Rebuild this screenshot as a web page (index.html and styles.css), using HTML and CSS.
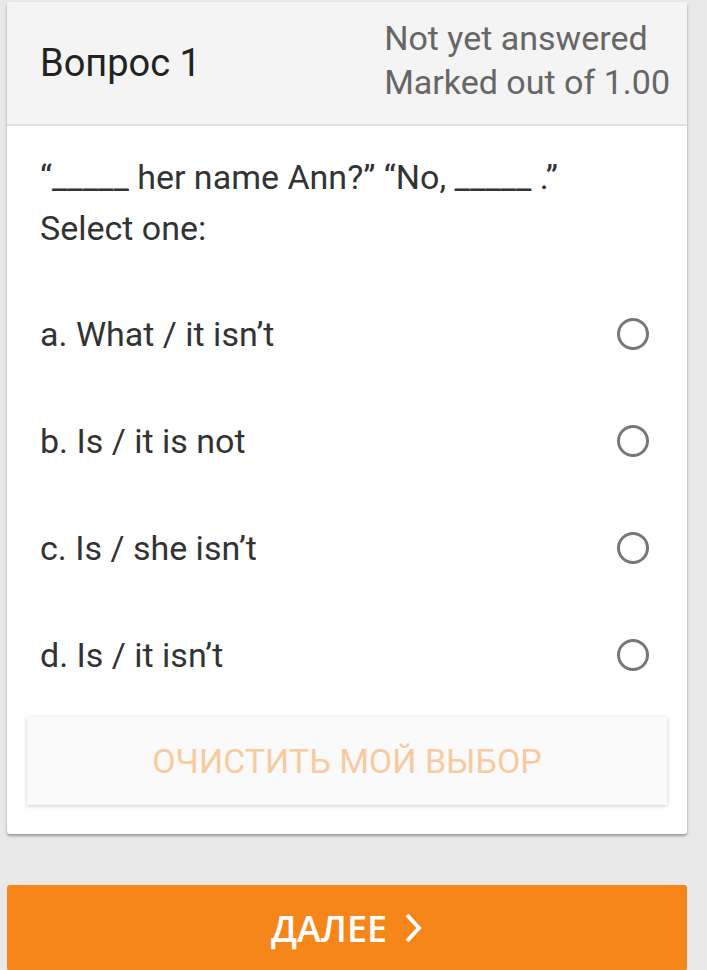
FILE: index.html
```html
<!DOCTYPE html>
<html lang="ru">
<head>
	<meta charset="UTF-8">
	<title>Вопрос 1</title>
	<meta name="viewport" content="width=device-width, initial-scale=1">
	<link rel="stylesheet" href="styles.css">
</head>
<body>
	<div id="page">
		<div class="card">
			<div class="card-head">
				<h2 class="q-title">Вопрос 1</h2>
				<div class="q-info">
					<div>Not yet answered</div>
					<div>Marked out of 1.00</div>
				</div>
			</div>
			<div class="card-body">
				<div class="q-text">
					<p>“_____ her name Ann?” “No, _____ .”</p>
					<p>Select one:</p>
				</div>
				<div class="answers">
					<label class="answer">
						<span>a. What / it isn’t</span>
						<span class="radio"></span>
					</label>
					<label class="answer">
						<span>b. Is / it is not</span>
						<span class="radio"></span>
					</label>
					<label class="answer">
						<span>c. Is / she isn’t</span>
						<span class="radio"></span>
					</label>
					<label class="answer">
						<span>d. Is / it isn’t</span>
						<span class="radio"></span>
					</label>
				</div>
				<button type="button" class="btn-clear">ОЧИСТИТЬ МОЙ ВЫБОР</button>
			</div>
		</div>
		<button type="button" class="btn-next">
			ДАЛЕЕ
			<svg width="20" height="32" viewBox="0 0 20 32"><path d="M4 3 L16 16 L4 29" fill="none" stroke="#fff" stroke-width="4"/></svg>
		</button>
	</div>
</body>
</html>
```

FILE: styles.css
```css
html, body {
	margin: 0;
	background: #e9e9e9;
}
body {
	font-family: Roboto, "Liberation Sans", sans-serif;
}
#page {
	padding: 2px 20px 0 7px;
}
.card {
	background: #fff;
	border-radius: 3px;
	box-shadow: 0 2px 3px rgba(0, 0, 0, 0.35);
	overflow: hidden;
}
.card-head {
	height: 122px;
	background: #f4f4f4;
	border-bottom: 2px solid #e2e2e2;
	display: flex;
	align-items: center;
	justify-content: space-between;
	padding: 0 17px 0 33px;
}
.q-title {
	margin: 0;
	font-size: 38px;
	font-weight: 400;
	color: #222;
}
.q-info {
	margin-bottom: 6px;
	font-size: 34px;
	line-height: 44px;
	color: #666;
}
.card-body {
	padding: 26px 20px 29px;
}
.q-text {
	padding-left: 13px;
	font-size: 34px;
	line-height: 51px;
	color: #333;
}
.q-text p {
	margin: 0;
}
.answers {
	margin-top: 26px;
}
.answer {
	height: 107px;
	display: flex;
	align-items: center;
	justify-content: space-between;
	padding: 0 18px 0 13px;
	font-size: 34px;
	color: #333;
}
.radio {
	width: 26px;
	height: 26px;
	border: 3px solid #777;
	border-radius: 50%;
}
.btn-clear {
	display: block;
	width: 100%;
	height: 88px;
	margin-top: 9px;
	border: none;
	background: #fafafa;
	box-shadow: 0 1px 4px rgba(0, 0, 0, 0.2);
	font-family: inherit;
	font-size: 34px;
	color: #f8caa0;
}
.btn-next {
	display: flex;
	align-items: center;
	justify-content: center;
	gap: 16px;
	width: 100%;
	height: 86px;
	margin-top: 51px;
	border: none;
	border-radius: 3px;
	background: #f7861a;
	font-family: "Open Sans", sans-serif;
	font-size: 36px;
	font-weight: 600;
	color: #fff;
}
```
